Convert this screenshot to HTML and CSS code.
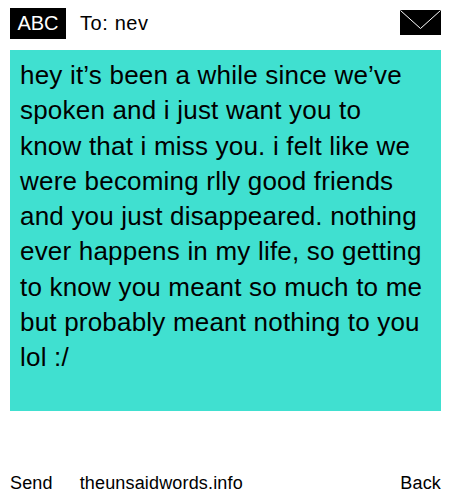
FILE: index.html
```html
<!DOCTYPE html>
<html lang="en">
<head>
  <meta charset="UTF-8">
  <title>The Unsaid Words</title>
  <link rel="stylesheet" href="styles.css">
</head>
<body>
<div class="phone">
  <div class="header">
    <span class="abc">ABC</span>
    <span class="to">To: nev</span>
    <svg class="envelope" width="41" height="25" viewBox="0 0 41 25">
      <rect width="41" height="25" fill="#000"/>
      <polyline points="0.5,0.5 20.5,18.5 40.5,0.5" fill="none" stroke="#fff" stroke-width="1"/>
    </svg>
  </div>
  <div class="message">hey it’s been a while since we’ve spoken and i just want you to know that i miss you. i felt like we were becoming rlly good friends and you just disappeared. nothing ever happens in my life, so getting to know you meant so much to me but probably meant nothing to you lol :/</div>
  <div class="footer">
    <span class="send">Send</span>
    <span class="site">theunsaidwords.info</span>
    <span class="back">Back</span>
  </div>
</div>
</body>
</html>
```

FILE: styles.css
```css
body {
  margin: 0;
  background: #fff;
  color: #000;
  font-family: 'Liberation Sans', Arial, sans-serif;
}
.phone {
  width: 431px;
  height: 500px;
  padding: 8px 9px 0 10px;
  display: flex;
  flex-direction: column;
}
.header {
  display: flex;
  align-items: flex-start;
  height: 42px;
}
.abc {
  width: 56px;
  height: 31px;
  background: #000;
  color: #fff;
  font-size: 20px;
  line-height: 31px;
  text-align: center;
}
.to {
  margin-left: 14px;
  font-size: 20px;
  line-height: 31px;
  letter-spacing: 0.6px;
}
.envelope {
  margin-left: auto;
  margin-top: 2px;
}
.message {
  height: 343px;
  padding: 8px 15px 10px 10px;
  background: #40e0d0;
  font-size: 26px;
  line-height: 35.25px;
  letter-spacing: 0.2px;
}
.footer {
  display: flex;
  margin-top: 62px;
  font-size: 18px;
  line-height: 21px;
  letter-spacing: 0.16px;
}
.site {
  margin-left: 27px;
}
.back {
  margin-left: auto;
}
```
